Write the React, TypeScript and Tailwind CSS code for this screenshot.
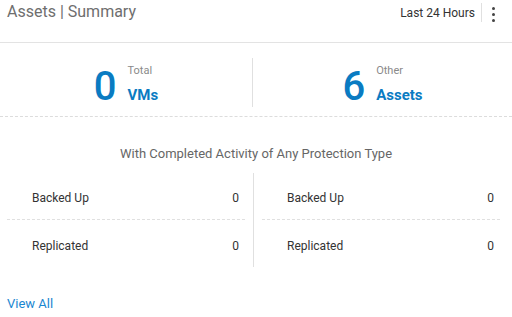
import React from 'react'

const Stat = ({ value, label, name }: { value: string; label: string; name: string }) => (
  <div className="flex h-[49px] justify-center items-start gap-[11px]">
    <div className="mt-[9px] text-[40px] leading-none font-medium text-[#0a7bc2]">{value}</div>
    <div className="flex flex-col mt-[6px]">
      <span className="text-[11px] leading-[14px] text-[#8a8a8a]">{label}</span>
      <span className="mt-[8px] text-[15px] leading-[18px] font-bold text-[#0a7bc2]">{name}</span>
    </div>
  </div>
)

const Row = ({ label, value, last }: { label: string; value: string; last?: boolean }) => (
  <div className={`flex h-[47px] pt-[4px] items-center justify-between pl-[25px] pr-[6px] text-[12px] text-[#333] ${last ? '' : 'border-b border-dashed border-[#e0e0e0]'}`}>
    <span>{label}</span>
    <span>{value}</span>
  </div>
)

export default function App() {
  return (
    <div className="w-[512px] h-[317px] bg-white overflow-hidden" style={{ fontFamily: 'Roboto, "Liberation Sans", sans-serif' }}>
      <div className="h-[43px] border-b border-[#e3e3e3] flex items-start justify-between pl-[7px] pr-[17px]">
        <h1 className="mt-[2px] text-[16px] leading-[20px] text-[#6e6e6e]">Assets | Summary</h1>
        <div className="flex items-center mt-[3px] h-[19px]">
          <span className="text-[12px] text-[#333] mt-[1px]">Last 24 Hours</span>
          <div className="ml-[6px] h-[19px] w-px bg-[#e0e0e0]"></div>
          <div className="ml-[10px] flex flex-col gap-[3px] mt-[3px]">
            <span className="block w-[3px] h-[3px] rounded-full bg-[#444]"></span>
            <span className="block w-[3px] h-[3px] rounded-full bg-[#444]"></span>
            <span className="block w-[3px] h-[3px] rounded-full bg-[#444]"></span>
          </div>
        </div>
      </div>

      <div className="grid grid-cols-[253px_1fr] pt-[15px] pb-[9px] border-b border-dashed border-[#dcdcdc]">
        <div className="border-r border-[#e0e0e0]">
          <Stat value="0" label="Total" name="VMs" />
        </div>
        <Stat value="6" label="Other" name="Assets" />
      </div>

      <div className="pt-[29px] mb-[11px] text-center text-[13px] leading-[16px] text-[#666]">
        With Completed Activity of Any Protection Type
      </div>

      <div className="grid grid-cols-[254px_1fr]">
        <div className="pl-[7px] pr-[8px] border-r border-[#e0e0e0]">
          <Row label="Backed Up" value="0" />
          <Row label="Replicated" value="0" last />
        </div>
        <div className="pl-[8px] pr-[12px]">
          <Row label="Backed Up" value="0" />
          <Row label="Replicated" value="0" last />
        </div>
      </div>

      <div className="pl-[7px] mt-[29px] text-[13px] leading-[16px] text-[#1a86d0]">View All</div>
    </div>
  )
}
